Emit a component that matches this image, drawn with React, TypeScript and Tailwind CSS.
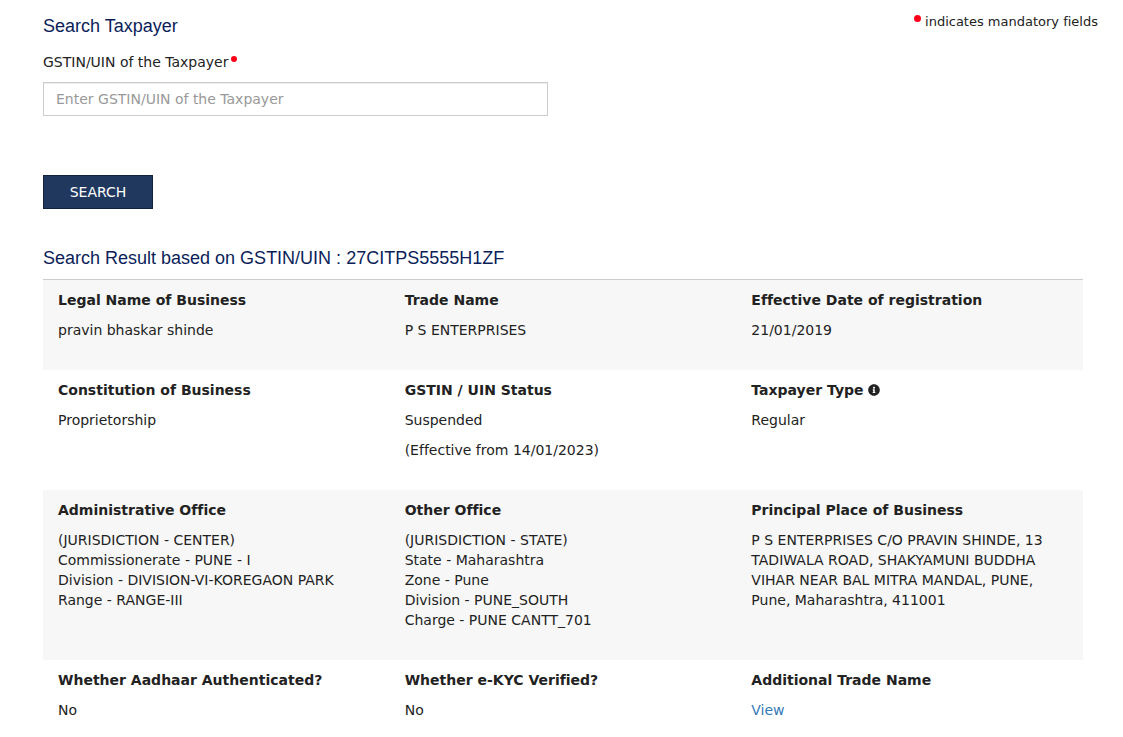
import React, { useState } from 'react';
import type { ReactNode } from 'react';
import { FaInfoCircle } from 'react-icons/fa';

interface Field {
  title: string;
  info?: boolean;
  values: ReactNode[];
}

const lines = (...items: string[]) =>
  items.map((item) => (
    <span key={item} className="block">
      {item}
    </span>
  ));

const rows: Field[][] = [
  [
    { title: 'Legal Name of Business', values: ['pravin bhaskar shinde'] },
    { title: 'Trade Name', values: ['P S ENTERPRISES'] },
    { title: 'Effective Date of registration', values: ['21/01/2019'] },
  ],
  [
    { title: 'Constitution of Business', values: ['Proprietorship'] },
    { title: 'GSTIN / UIN Status', values: ['Suspended', '(Effective from 14/01/2023)'] },
    { title: 'Taxpayer Type', info: true, values: ['Regular'] },
  ],
  [
    {
      title: 'Administrative Office',
      values: [
        lines(
          '(JURISDICTION - CENTER)',
          'Commissionerate - PUNE - I',
          'Division - DIVISION-VI-KOREGAON PARK',
          'Range - RANGE-III'
        ),
      ],
    },
    {
      title: 'Other Office',
      values: [
        lines(
          '(JURISDICTION - STATE)',
          'State - Maharashtra',
          'Zone - Pune',
          'Division - PUNE_SOUTH',
          'Charge - PUNE CANTT_701'
        ),
      ],
    },
    {
      title: 'Principal Place of Business',
      values: [
        'P S ENTERPRISES C/O PRAVIN SHINDE, 13 TADIWALA ROAD, SHAKYAMUNI BUDDHA VIHAR NEAR BAL MITRA MANDAL, PUNE, Pune, Maharashtra, 411001',
      ],
    },
  ],
  [
    { title: 'Whether Aadhaar Authenticated?', values: ['No'] },
    { title: 'Whether e-KYC Verified?', values: ['No'] },
    {
      title: 'Additional Trade Name',
      values: [
        <a href="#" className="text-[#337ab7] hover:underline">
          View
        </a>,
      ],
    },
  ],
];

function SectionTitle({ children }: { children: ReactNode }) {
  return (
    <h4 className="font-['Liberation_Sans',Arial,sans-serif] text-[18px] leading-5 text-[#0b1e59]">
      {children}
    </h4>
  );
}

function ResultCell({ field }: { field: Field }) {
  return (
    <div className="px-[15px]">
      <p className="mb-2.5 font-bold">
        {field.title}
        {field.info && <FaInfoCircle className="ml-1 inline-block size-3 align-[-1px]" />}
      </p>
      {field.values.map((value, i) => (
        <p key={i} className="mb-2.5">
          {value}
        </p>
      ))}
    </div>
  );
}

export default function App() {
  const [gstin, setGstin] = useState('');

  return (
    <main className="bg-white pr-[25px] pl-[43px] font-['Verdana','DejaVu_Sans',sans-serif] text-[14px] leading-5 text-[#222222] [font-variant-ligatures:none]">
      <div className="flex items-start justify-between pt-3">
        <div className="pt-1">
          <SectionTitle>Search Taxpayer</SectionTitle>
        </div>
        <p className="flex items-start text-[13px]">
          <span className="mt-[3px] mr-1 size-[7px] rounded-full bg-[#ff0018]" />
          indicates mandatory fields
        </p>
      </div>

      <form className="mr-[15px] pt-4" onSubmit={(e) => e.preventDefault()}>
        <div className="grid grid-cols-2 gap-[30px]">
          <div>
            <label htmlFor="gstin" className="mb-2.5 flex items-start">
              GSTIN/UIN of the Taxpayer
              <span className="mt-1 ml-0.5 size-[6px] rounded-full bg-[#ff0018]" />
            </label>
            <input
              id="gstin"
              type="text"
              value={gstin}
              onChange={(e) => setGstin(e.target.value)}
              placeholder="Enter GSTIN/UIN of the Taxpayer"
              className="block h-[34px] w-full border border-[#cccccc] px-3 shadow-[inset_0_1px_1px_rgba(0,0,0,0.075)] outline-none placeholder:text-[#999999] focus:border-[#66afe9]"
            />
          </div>
        </div>
        <button
          type="submit"
          className="mt-[59px] h-[34px] min-w-[110px] border border-[#14233c] bg-[#21385e] px-6 text-white hover:bg-[#14233c]"
        >
          SEARCH
        </button>
      </form>

      <section className="mr-[15px] pt-[39px]">
        <SectionTitle>Search Result based on GSTIN/UIN : 27CITPS5555H1ZF</SectionTitle>
        <div className="mt-[11px] border-t border-[#cccccc]">
          {rows.map((fields, i) => (
            <div key={i} className="grid grid-cols-3 pt-2.5 pb-5 last:pb-0 odd:bg-[#f7f7f7]">
              {fields.map((field) => (
                <ResultCell key={field.title} field={field} />
              ))}
            </div>
          ))}
        </div>
      </section>
    </main>
  );
}
